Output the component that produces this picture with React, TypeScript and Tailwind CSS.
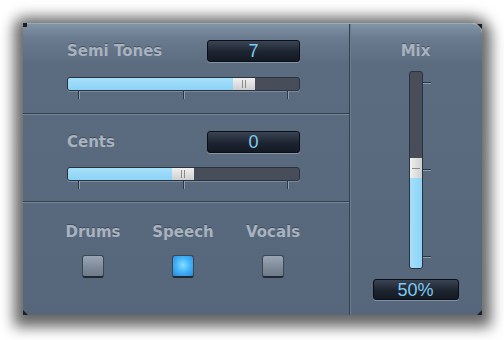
import React, { FC } from "react";

const label = "font-['DejaVu_Sans',sans-serif] font-bold text-[15px] leading-[18px] text-[#a9b3bf] [text-shadow:0_-1px_0_rgba(40,50,62,0.5)]";

const ValueBox: FC<{ value: string; className?: string }> = ({ value, className }) => (
  <div className={`rounded-[3px] border border-[#0b0e13] bg-[linear-gradient(to_bottom,#3a4455,#1d2430_55%,#141a23)] shadow-[0_1px_0_#8394a8] flex items-center justify-center ${className ?? ""}`}>
    <span className="font-['Liberation_Sans',sans-serif] text-[18px] leading-none text-[#7cccf2]">{value}</span>
  </div>
);

const HSlider: FC<{ fill: number }> = ({ fill }) => (
  <div className="w-[233px]">
    <div className="h-[14px] rounded-[3px] border border-[#2a323e] bg-[#474e59] flex overflow-hidden shadow-[0_1px_0_#7a8ba0]">
      <div className="h-full bg-[linear-gradient(to_bottom,#a6e0fa,#8bd3f5)]" style={{ width: fill }} />
      <div className="w-[22px] h-full bg-[linear-gradient(to_bottom,#f0f0f0,#cfcfcf)] flex items-center justify-center gap-[2px]">
        <div className="w-px h-[8px] bg-[#8a8a8a]" />
        <div className="w-px h-[8px] bg-[#8a8a8a]" />
      </div>
    </div>
    <div className="flex justify-between px-[11px]">
      <div className="w-[2px] h-[8px] bg-[linear-gradient(to_right,#2b3746_50%,#8d9cae_50%)]" />
      <div className="w-[2px] h-[8px] bg-[linear-gradient(to_right,#2b3746_50%,#8d9cae_50%)]" />
      <div className="w-[2px] h-[8px] bg-[linear-gradient(to_right,#2b3746_50%,#8d9cae_50%)]" />
    </div>
  </div>
);

const HDivider: FC = () => (
  <div>
    <div className="h-px bg-[#33404e]" />
    <div className="h-px bg-[#75879b]" />
  </div>
);

const Check: FC<{ on?: boolean }> = ({ on }) => (
  <div
    className={`w-[22px] h-[23px] rounded-[3px] border border-[#3a4654] border-b-2 border-b-[#1f2731] ${
      on
        ? "bg-[radial-gradient(circle_at_50%_45%,#8adcff_0%,#45b6fb_45%,#2a86d6_100%)]"
        : "bg-[linear-gradient(to_bottom,#9aa6b3,#7d8997_60%,#6f7b89)]"
    }`}
  />
);

export default function App() {
  return (
    <div className="w-[504px] h-[340px] bg-white pt-[23px] pl-[23px] overflow-hidden">
      <div className="relative w-[459px] h-[292px] flex rounded-tr-[10px] rounded-tl-[4px] bg-[linear-gradient(to_bottom,#8294a8_0px,#6a7b8f_14px,#5b6c80_40px,#56677b_100%)] shadow-[0_3px_14px_9px_rgba(0,0,0,0.6)] border-t border-[#9aa9ba]">
        {/* corner marks */}
        <div className="absolute -top-px left-0 w-[4px] h-[4px] bg-[#1c1f24]" />
        <div className="absolute top-0 right-0 w-0 h-0 border-l-[5px] border-l-transparent border-t-[5px] border-t-[#1c1f24]" />
        <div className="absolute bottom-0 left-0 w-0 h-0 border-r-[5px] border-r-transparent border-b-[5px] border-b-[#1c1f24]" />
        <div className="absolute bottom-0 right-0 w-0 h-0 border-l-[5px] border-l-transparent border-b-[5px] border-b-[#1c1f24]" />
        <div className="w-[327px] flex flex-col border-r border-[#34414f]">
          <div className="h-[89px] pt-[16px] pl-[44px]">
            <div className="w-[233px] flex items-center justify-between">
              <span className={label}>Semi Tones</span>
              <ValueBox value="7" className="w-[93px] h-[22px]" />
            </div>
            <div className="mt-[15px]">
              <HSlider fill={165} />
            </div>
          </div>
          <HDivider />
          <div className="h-[86px] pt-[16px] pl-[44px]">
            <div className="w-[233px] flex items-center justify-between">
              <span className={label}>Cents</span>
              <ValueBox value="0" className="w-[93px] h-[22px]" />
            </div>
            <div className="mt-[14px]">
              <HSlider fill={104} />
            </div>
          </div>
          <HDivider />
          <div className="flex-1 pt-[20px] pl-[25px] flex">
            {[
              ["Drums", false],
              ["Speech", true],
              ["Vocals", false],
            ].map(([name, on]) => (
              <div key={name as string} className="w-[90px] flex flex-col items-center">
                <span className={label}>{name as string}</span>
                <div className="mt-[14px]">
                  <Check on={on as boolean} />
                </div>
              </div>
            ))}
          </div>
        </div>
        <div className="flex-1 border-l border-[#6c7d91] flex flex-col items-center pt-[18px] pr-[2px]">
          <span className={label}>Mix</span>
          <div className="mt-[11px] relative">
            <div className="w-[14px] h-[198px] rounded-[3px] border border-[#2a323e] bg-[#474e59] flex flex-col overflow-hidden">
              <div className="flex-1" />
              <div className="h-[20px] bg-[linear-gradient(to_right,#f0f0f0,#cfcfcf)] flex items-center justify-center">
                <div className="w-[8px] h-px bg-[#8a8a8a]" />
              </div>
              <div className="h-[90px] bg-[linear-gradient(to_right,#a6e0fa,#8bd3f5)]" />
            </div>
            <div className="absolute left-full top-0 h-[198px] flex flex-col justify-between py-[11px]">
              <div className="w-[8px] h-[2px] bg-[linear-gradient(to_bottom,#2b3746_50%,#8d9cae_50%)]" />
              <div className="w-[8px] h-[2px] bg-[linear-gradient(to_bottom,#2b3746_50%,#8d9cae_50%)]" />
              <div className="w-[8px] h-[2px] bg-[linear-gradient(to_bottom,#2b3746_50%,#8d9cae_50%)]" />
            </div>
          </div>
          <ValueBox value="50%" className="mt-[10px] w-[86px] h-[21px]" />
        </div>
      </div>
    </div>
  );
}
